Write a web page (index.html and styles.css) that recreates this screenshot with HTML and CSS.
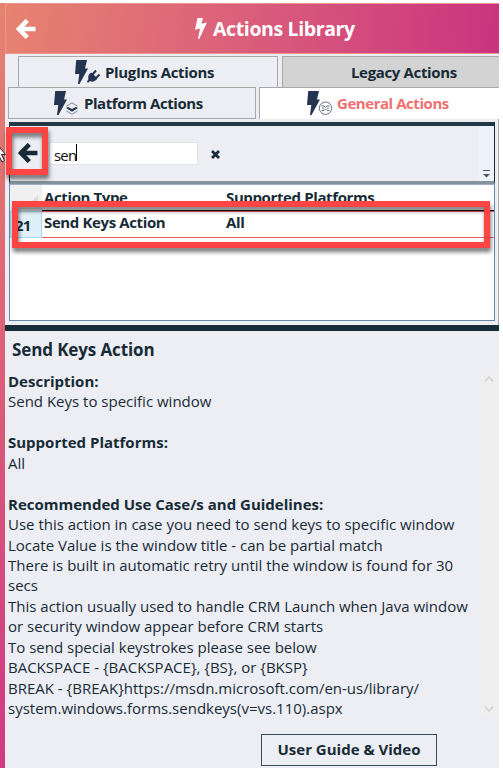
FILE: index.html
```html
<!DOCTYPE html>
<html lang="en">
<head>
<meta charset="utf-8">
<title>Actions Library</title>
<link rel="stylesheet" href="styles.css">
</head>
<body>
<svg class="defs" width="0" height="0">
  <symbol id="bolt" viewBox="0 0 13 24"><path d="M1.2 0H12L10 8.5H13L4.5 24H3L4.3 14H0Z"/></symbol>
  <symbol id="arrow" viewBox="0 0 20 20"><path d="M11.3 1.5L3 10L11.3 18.5M3.5 10H19.5" fill="none" stroke="currentColor" stroke-width="4.6"/></symbol>
</svg>
<div class="window">
  <div class="edge"></div>
  <main class="panel">
    <header class="header">
      <svg class="header-back"><use href="#arrow"/></svg>
      <div class="header-title">
        <svg class="header-bolt" viewBox="0 0 12 21"><path d="M2.5 0H8L6.5 5.8L12 4.5L4.2 21H3L5 10.5L0 11.8Z"/></svg>
        <h1>Actions Library</h1>
      </div>
    </header>
    <nav class="tabs">
      <div class="tab-row upper">
        <div class="tab plugins">
          <svg class="tab-icon" viewBox="0 0 26 24"><use href="#bolt" width="13" height="24"/><path d="M12 21.5L13.5 19C12.5 15.5 14.5 13.5 16.5 12.5L22.5 18.5C20.5 21.5 17 22.5 15 21L13 23Z"/><path d="M17.5 14.5L21 10.5M21 18L24.5 14.5" stroke="#233550" stroke-width="2"/></svg>
          <span>PlugIns Actions</span>
        </div>
        <div class="tab legacy"><span>Legacy Actions</span></div>
      </div>
      <div class="tab-row lower">
        <div class="tab platform">
          <svg class="tab-icon" viewBox="0 0 26 24"><use href="#bolt" width="13" height="24"/><path d="M12.5 15L18 11.8L23.5 15M12.5 20L18 23.3L23.5 20" fill="none" stroke="#7b8798"/><path d="M12 17L14 16L18 18L22 16L24 17L18 20.8Z"/></svg>
          <span>Platform Actions</span>
        </div>
        <div class="tab general">
          <svg class="tab-icon" viewBox="0 0 26 24"><use href="#bolt" width="13" height="24"/><g fill="none" stroke="#647186"><circle cx="18.5" cy="17.2" r="6.2"/><path d="M14.5 15H17L18.5 16.3L20 15H22.5M14.5 19.5H17L18.5 18L20 19.5H22.5M15 17.2H17M20 17.2H22"/></g></svg>
          <span>General Actions</span>
        </div>
      </div>
    </nav>
    <section class="content">
      <div class="toolbar">
        <svg class="tool-back"><use href="#arrow"/></svg>
        <div class="search"><span>sen</span><i class="caret"></i></div>
        <svg class="clear" viewBox="0 0 9 9"><path d="M1 1L8 8M8 1L1 8" stroke="#172b37" stroke-width="2.8"/></svg>
        <div class="overflow"><svg viewBox="0 0 7 8"><path d="M0 .5H7" stroke="#555"/><path d="M0 4H7L3.5 7.5Z" fill="#555"/></svg></div>
      </div>
      <div class="grid">
        <div class="grid-head">
          <div class="corner"></div>
          <div class="type">Action Type</div><div class="platforms">Supported Platforms</div>
        </div>
        <div class="grid-row">
          <div class="index">21</div>
          <div class="type">Send Keys Action</div><div class="platforms">All</div>
        </div>
      </div>
    </section>
    <section class="details">
      <h2><span>Send Keys Action</span></h2>
      <div class="scroll">
        <div class="copy">
          <b>Description:</b><br>Send Keys to specific window<br><br>
          <b>Supported Platforms:</b><br>All<br><br>
          <b>Recommended Use Case/s and Guidelines:</b><br>
          Use this action in case you need to send keys to specific window<br>
          Locate Value is the window title - can be partial match<br>
          There is built in automatic retry until the window is found for 30<br>secs<br>
          This action usually used to handle CRM Launch when Java window<br>
          or security window appear before CRM starts<br>
          To send special keystrokes please see below<br>
          BACKSPACE - {BACKSPACE}, {BS}, or {BKSP}<br>
          BREAK - {BREAK}https://msdn.microsoft.com/en-us/library/<br>
          system.windows.forms.sendkeys(v=vs.110).aspx
        </div>
        <div class="scrollbar">
          <svg viewBox="0 0 10 8"><path d="M.8 6.5L5 2L9.2 6.5"/></svg>
          <svg viewBox="0 0 10 8"><path d="M.8 1.5L5 6L9.2 1.5"/></svg>
        </div>
      </div>
      <div class="guide"><span>User Guide &amp; Video</span></div>
    </section>
  </main>
  <div class="mark mark-back"></div>
  <div class="mark mark-row"></div>
  <svg class="cursor" viewBox="0 0 7 20"><path d="M-5 -2L5.5 10.5H1.5L4.5 16.5L2 18L-1 12" fill="#fff" stroke="#222"/></svg>
</div>
</body>
</html>
```
FILE: styles.css
```css
* { box-sizing: border-box; }
body { margin: 0; background: #fff; color: #172b37; font-family: "Open Sans", "Noto Sans", sans-serif; overflow: hidden; }
svg { display: block; flex: none; }
.defs { position: absolute; }
.window { position: relative; display: flex; width: 499px; height: 768px; padding-top: 3px; }
.edge { width: 5px; background: linear-gradient(#e58370, #df6875 35%, #d34282 85%, #d23b82); }
.panel { width: 494px; display: flex; flex-direction: column; background: #edeef3; white-space: nowrap; }
.panel span, h1 { display: inline-block; }

.header { display: flex; align-items: center; height: 51px; border: solid #eb958d; border-width: 1px 0 1px 1px; background: linear-gradient(98deg, #e78370, #da5d7b 50%, #ca337f); color: #fff; }
.header-back { width: 20px; height: 20px; margin-left: 10px; }
.header-title { display: flex; align-items: center; margin-left: 159px; gap: 6px; }
.header-bolt { width: 12px; height: 21px; fill: #fff; margin-top: -1px; }
h1 { margin: 0; font-size: 19.5px; line-height: 28px; font-weight: 700; letter-spacing: -0.38px; }

.tabs { padding-top: 2px; height: 65px; font-size: 15px; font-weight: 700; letter-spacing: -0.35px; }
.tab-row { display: flex; }
.upper { height: 31px; padding-left: 13px; gap: 4px; }
.lower { height: 32px; padding-left: 3px; gap: 3px; }
.tab { display: flex; align-items: center; border: 1px solid #a8a8a8; border-bottom: 0; gap: 4px; }
.tab-icon { width: 26px; height: 24px; fill: #233550; }
.plugins { width: 260px; padding-left: 56px; }
.legacy { width: 217px; padding-left: 68px; background: #d3d3d3; border-right: 0; }
.platform { width: 248px; padding-left: 45px; border-bottom: 1px solid #a8a8a8; }
.general { width: 240px; padding: 0 0 1px 47px; background: #fff; color: #f1706f; border-right: 0; }
.lower .tab { letter-spacing: -0.45px; }

.content { height: 206px; padding: 3px 3px 0 4px; border-right: 1px solid #aaa; }
.toolbar { display: flex; align-items: center; height: 62px; border: 1px solid #172b37; border-width: 4px 1px 3px; border-top-color: #203945; border-bottom-color: #84929d; }
.tool-back { width: 20px; height: 20px; margin-left: 8px; margin-top: -1px; }
.search { display: flex; align-items: center; width: 149px; height: 23px; margin-left: 11px; padding-left: 4px; border: 1px solid #e2e4e9; background: #fff; color: #111; font-size: 15px; padding-top: 3px; letter-spacing: -0.8px; }
.caret { width: 1px; height: 17px; background: #000; margin-top: -5px; }
.clear { width: 9px; height: 9px; margin-left: 13px; margin-top: 1px; }
.overflow { width: 15px; height: 55px; margin-left: auto; padding: 44px 0 0 4px; background: #edf3fc; }
.overflow svg { width: 7px; height: 8px; }
.grid { height: 137px; border: 1px solid #6588b0; border-top-color: #9daec3; background: #fff; font-size: 15px; font-weight: 700; letter-spacing: -0.38px; }
.grid-head, .grid-row { display: flex; }
.grid-head { height: 26px; }
.grid-head > :not(.corner) { padding-top: 1px; line-height: 22px; border-bottom: 1px solid #111; }
.grid-row > :not(.index) { line-height: 21px; border: solid #ec5c60; border-width: 1px 0; }
.corner, .index { width: 32px; background: #f0f0f0; }
.corner { background: linear-gradient(135deg, transparent 50%, #d8d8d8 50%) 22px 10px / 6px 7px no-repeat #f0f0f0; }
.type { width: 184px; padding-left: 2px; }
.platforms { flex: 1; }
.grid-row { height: 27px; }
.index { padding: 3px 0 0 4px; line-height: 20px; letter-spacing: -0.8px; background: #e1eff8; border: 1px solid #9ed7f5; }

.details { flex: 1; border-top: 6px solid #172d37; display: flex; flex-direction: column; }
h2 { margin: 0; padding: 6px 0 0 7px; height: 40px; font-size: 17px; line-height: 25px; letter-spacing: -0.12px; }
.scroll { display: flex; justify-content: space-between; height: 347px; }
.copy { padding-left: 3px; font-size: 15px; line-height: 20.43px; }
.scrollbar { display: flex; flex-direction: column; justify-content: space-between; width: 20px; padding: 4px 5px 5px; background: #efefef; }
.scrollbar svg { width: 10px; height: 8px; fill: none; stroke: #d2d2d2; stroke-width: 1.6; }
.guide { width: 176px; height: 32px; margin: 16px 0 0 256px; border: 1.5px solid #344c55; font-size: 15px; line-height: 29px; font-weight: 700; text-align: center; }

.mark { position: absolute; border: 6px solid #ff4444; filter: drop-shadow(1px 4px 2px #0008); }
.mark-back { left: 6px; top: 127px; width: 42px; height: 48px; }
.mark-row { left: 12px; top: 201px; width: 478px; height: 47px; }
.cursor { position: absolute; left: 0; top: 144px; width: 7px; height: 20px; }
```
